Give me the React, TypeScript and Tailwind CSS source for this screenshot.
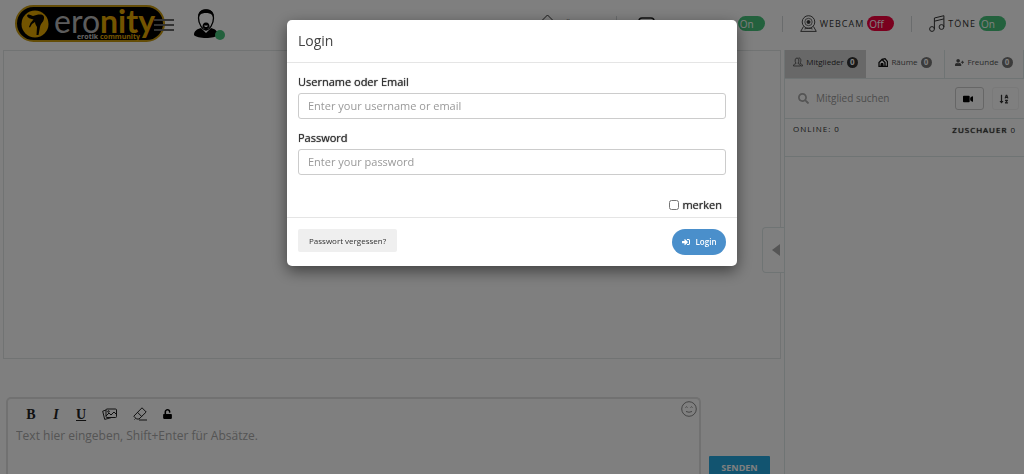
import React from 'react';
import { FaSearch, FaVideo, FaUserPlus, FaSignInAlt, FaUnlock, FaSortAlphaDown } from 'react-icons/fa';

interface NavToggleProps {
  label: string;
  on: boolean;
  icon: React.ReactNode;
}

const Switch: React.FC<{ label: string; on: boolean }> = ({ label, on }) => (
  <button
    type="button"
    role="switch"
    aria-checked={on}
    aria-label={label}
    className={`flex h-[15px] w-[27px] shrink-0 items-center rounded-full pl-[2px] pt-[2px] text-[10px] tracking-normal text-white ${on ? 'bg-[#46c37b]' : 'bg-[#f5003d]'}`}
  >
    {on ? 'On' : 'Off'}
  </button>
);

const NavToggle: React.FC<NavToggleProps> = ({ label, on, icon }) => (
  <div className="flex items-center gap-[3px] text-[9px] tracking-[1px] text-[#333]">
    {icon}
    <span>{label}</span>
    <Switch label={label} on={on} />
  </div>
);

const Divider = () => <span className="h-4 w-px bg-[#d4d8da]" />;

const Logo = () => (
  <a href="#" aria-label="eronity" className="flex h-[37px] w-[150px] shrink-0 items-center rounded-full border-2 border-[#c99a10] bg-black pl-[4px]">
    <svg viewBox="0 0 28 28" className="h-7 w-7 shrink-0" aria-hidden="true">
      <circle cx="14" cy="14" r="13.5" fill="#e6a800" />
      <path
        d="M6 6c0-1.500 2-2 3.500-1L12 6c3-1 7-2 9.500-1 2 1 2 4 .5 6.500-1.500 2-2.500 3-3 5.500l-1.500 8h-2l.5-8c-1-2-2-3-2-5l-3 2-2 3.500-1-.5 1.500-4 3-3.500C10 8.500 8 9 6 6z"
        fill="#0a0700"
      />
    </svg>
    <span className="ml-[5px] flex flex-col items-end">
      <span className="font-['Lato'] text-[32px] leading-[25px] text-[#b8b8b8]">
        ero<b className="text-[#e6a800]">nity</b>
      </span>
      <span className="mr-[15px] text-[7px] font-bold leading-[7px] text-[#ccc]">
        erotik <span className="text-[#e6a800]">community</span>
      </span>
    </span>
  </a>
);

const Avatar = () => (
  <div className="relative ml-5 h-[30px] w-[24px]">
    <svg viewBox="0 0 24 30" className="h-[30px] w-[24px]" aria-hidden="true">
      <path d="M0 26c0-4 3-6 7-7l5 5 5-5c4 1 7 3 7 7-3 4-21 4-24 0z" fill="#000" />
      <path d="M4.500 9C4.500 4 7 1 12 1s7.500 3 7.500 8c0 6-4 12-7.500 12S4.500 15 4.500 9z" fill="#fff" stroke="#000" strokeWidth="1.300" />
      <path d="M4.500 10C3.500 3 7 .5 12 .5S20.500 3 19.500 10c-.5-4-2.500-6-7.500-6s-7 2-7.500 6z" fill="#000" />
      <path d="M8.500 18c0-3 1-4.500 3.500-4.500s3.500 1.500 3.500 4.500L12 21.500z" fill="#000" />
      <path d="M10 16.500h4l-1 1.500h-2z" fill="#fff" />
    </svg>
    <span className="absolute -bottom-px left-[21px] h-[10px] w-[10px] rounded-full bg-[#46c37b]" />
  </div>
);

const WebcamIcon = () => (
  <svg viewBox="0 0 17 17" className="h-[17px] w-[17px]" fill="none" stroke="#333" aria-hidden="true">
    <circle cx="8.500" cy="7" r="6.300" strokeWidth=".9" />
    <circle cx="8.500" cy="7" r="3.700" strokeWidth=".7" />
    <circle cx="8.500" cy="7" r="1.500" fill="#333" />
    <path d="M3.500 11.500L.7 16.400h15.600l-2.800-4.900M4.500 14c2-1 6-1 8 0" strokeWidth=".9" />
  </svg>
);

const MusicIcon = () => (
  <svg viewBox="0 0 16 17" className="h-[17px] w-4" fill="none" stroke="#333" aria-hidden="true">
    <circle cx="3" cy="14" r="2.400" />
    <circle cx="12.500" cy="12" r="2.400" />
    <path d="M5.400 14V3l9.500-2.300V12M5.400 6.200l9.500-2.300" />
  </svg>
);

const sidebarTabs = [
  { id: 'mitglieder', label: 'Mitglieder', active: true },
  { id: 'raeume', label: 'Räume', active: false },
  { id: 'freunde', label: 'Freunde', active: false },
];

const TabIcon: React.FC<{ id: string }> = ({ id }) => {
  if (id === 'freunde') return <FaUserPlus className="h-[9px] w-[9px]" />;
  if (id === 'raeume')
    return (
      <svg viewBox="0 0 10 9" className="h-[9px] w-[10px]" fill="none" stroke="#111" aria-hidden="true">
        <path d="M1 8.500V4.500L4 1.500l3 3v4zM4 1.500l3-.8 2.500 3v4.800H7" strokeWidth="1.300" />
        <path d="M3 8.500v-3h2v3" fill="#111" />
      </svg>
    );
  return (
    <svg viewBox="0 0 10 10" className="h-[10px] w-[10px]" fill="none" stroke="#444" strokeWidth=".8" aria-hidden="true">
      <path d="M.5 9c0-2 1.500-2 2.500-2.500C1.500 4 2 1 4 1s2.500 3 1 5.500C6 7 7.500 7 7.500 9zM5.500 1C8 .5 8.500 4 7 6.200 8 7 9.500 7 9.500 9H8" />
    </svg>
  );
};

const Header = () => (
  <header className="flex h-[50px] shrink-0 items-center justify-between pb-[3px] pl-[15px] pr-[18px]">
    <div className="flex items-center">
      <Logo />
      <button type="button" aria-label="Menü" className="relative -ml-[11px] mt-[3px] flex w-5 flex-col gap-[3px]">
        <span className="h-[2px] bg-[#666]" />
        <span className="h-[2px] bg-[#666]" />
        <span className="h-[2px] bg-[#666]" />
      </button>
      <Avatar />
    </div>
    <nav className="flex items-center gap-[17px]">
      <a href="#" className="flex w-[60px] items-center gap-[3px] text-[9px] tracking-[1px] text-[#333]">
        <svg viewBox="0 0 17 20" className="h-5 w-[17px] shrink-0" fill="none" stroke="#333" aria-hidden="true">
          <path d="M.5 9l8-8 8 8M3 8v11h11V8" />
        </svg>
        RÄUME
      </a>
      <Divider />
      <div className="flex w-[131px] items-center justify-between pl-1 text-[9px] tracking-[1px] text-[#333]">
        <svg viewBox="0 0 17 14" className="h-[14px] w-[17px]" fill="none" stroke="#222" aria-hidden="true">
          <rect x="1" y="1" width="15" height="12" rx="3" strokeWidth="1.500" />
        </svg>
        PRIVATCHAT
        <Switch label="Privatchat" on />
      </div>
      <Divider />
      <NavToggle label="WEBCAM" on={false} icon={<WebcamIcon />} />
      <Divider />
      <NavToggle label="TÖNE" on icon={<MusicIcon />} />
    </nav>
  </header>
);

const Sidebar = () => (
  <aside className="relative w-[240px] shrink-0 border-l border-[#dfe8e8] text-[#333]">
    <button
      type="button"
      aria-label="Seitenleiste"
      className="absolute -left-[23px] top-[177px] flex h-[46px] w-[22px] items-center justify-center rounded-l border border-r-0 border-[#dfe8e8] bg-white pl-1"
    >
      <svg viewBox="0 0 8 12" className="h-3 w-2" aria-hidden="true">
        <path d="M8 0v12L0 6z" fill="#aaa" />
      </svg>
    </button>
    <div role="tablist" className="flex h-[29px] border-b border-[#dfe8e8] text-[8px]">
      {sidebarTabs.map((tab) => (
        <button
          key={tab.id}
          type="button"
          role="tab"
          aria-selected={tab.active}
          className={`flex items-center justify-center gap-[3px] pb-1 ${tab.active ? 'w-[81px] bg-[#d0d0d0]' : 'flex-1 border-r border-[#dfe8e8] text-[#555]'}`}
        >
          <TabIcon id={tab.id} />
          {tab.label}
          <span className={`flex h-[11px] w-[11px] items-center justify-center rounded-full text-[8px] font-bold text-white ${tab.active ? 'bg-[#333]' : 'bg-[#777]'}`}>
            0
          </span>
        </button>
      ))}
    </div>
    <div className="flex h-[40px] items-center border-b border-[#dfe8e8] pl-[13px] pr-[5px]">
      <FaSearch className="h-[11px] w-[11px] text-[#aaa]" />
      <input aria-label="Mitglied suchen" placeholder="Mitglied suchen" className="ml-[7px] min-w-0 flex-1 bg-transparent text-[10px] outline-none placeholder:text-[#999]" />
      <button type="button" aria-label="Nur mit Webcam" className="flex h-[23px] w-[29px] items-center justify-center rounded-[3px] border border-[#ccc] pr-[3px]">
        <FaVideo className="h-[10px] w-[10px] text-black" />
      </button>
      <button type="button" aria-label="Sortieren" className="ml-[8px] flex h-[23px] w-[27px] items-center justify-center rounded-[3px] border border-[#f2f2f2] pr-[3px]">
        <FaSortAlphaDown className="h-[10px] w-[10px]" />
      </button>
    </div>
    <div className="flex h-[38px] justify-between border-b border-[#dfe8e8] pl-2 pr-[8px] pt-[3px] text-[8px] leading-[14px] tracking-[1px]">
      <span>ONLINE: 0</span>
      <span className="pt-[1px]">
        <span className="[text-shadow:0_0_1px_#000]">ZUSCHAUER</span> 0
      </span>
    </div>
  </aside>
);

const Composer = () => (
  <div className="flex h-[77px] shrink-0 gap-2 pl-[3px] pr-[11px]">
    <div className="flex-1 rounded-t-[5px] border-2 border-b-0 border-[#e2e2e2] pl-2 pr-[2px] pt-[2px]">
      <div className="flex h-[27px] items-start justify-between">
        <div className="flex h-[26px] items-center gap-4 pl-[10px] font-['Liberation_Serif'] text-[14px] text-[#222]">
          <button type="button" aria-label="Fett" className="w-[10px] font-bold">B</button>
          <button type="button" aria-label="Kursiv" className="w-[8px] font-bold italic">I</button>
          <button type="button" aria-label="Unterstrichen" className="w-[10px] font-bold underline">U</button>
          <button type="button" aria-label="Bild">
            <svg viewBox="0 0 15 12" className="h-3 w-[15px]" fill="none" stroke="#222" aria-hidden="true">
              <rect x="4" y="1" width="10.500" height="8.500" rx="1" />
              <path d="M4 2L.7 3.200l2 8.200L9 9.700M4 8l3-3 2 2 3-3 2.500 2.500" />
              <circle cx="6.500" cy="3.500" r=".8" />
            </svg>
          </button>
          <button type="button" aria-label="Löschen">
            <svg viewBox="0 0 14 14" className="h-[14px] w-[14px]" fill="none" stroke="#222" aria-hidden="true">
              <path d="M9 .8L13.200 5 6 12H3.500L.8 9.200zM4.500 5.300l4.200 4.200M6 13h8M1.500 12.500l1-1" />
            </svg>
          </button>
          <button type="button" aria-label="Entsperren">
            <FaUnlock className="h-[10px] w-[9px] text-black" />
          </button>
        </div>
        <button type="button" aria-label="Smileys">
          <svg viewBox="0 0 16 16" className="h-4 w-4" fill="none" stroke="#888" aria-hidden="true">
            <circle cx="8" cy="8" r="7.300" />
            <path d="M4.500 6.500q1-1.500 2 0M9.500 6.500q1-1.500 2 0M5 10.500q3 1.500 6 0" />
          </svg>
        </button>
      </div>
      <textarea
        aria-label="Nachricht"
        placeholder="Text hier eingeben, Shift+Enter für Absätze."
        className="block h-[44px] w-full resize-none bg-transparent text-[12px] leading-[16px] outline-none placeholder:text-[#aaa]"
      />
    </div>
    <button type="button" className="mt-[59px] h-6 w-[61px] rounded-[1px] bg-[#25a9e0] text-[9px] font-bold text-white">
      SENDEN
    </button>
  </div>
);

const LoginDialog = () => (
  <div className="fixed inset-0 flex items-start justify-center bg-black/50 px-4 pt-5">
    <form
      role="dialog"
      aria-label="Login"
      onSubmit={(e) => e.preventDefault()}
      className="w-full max-w-[450px] rounded-[5px] bg-white text-[#333] shadow-[0_5px_15px_rgba(0,0,0,0.5)]"
    >
      <h4 className="border-b border-[#e5e5e5] px-[11px] py-[11px] text-[14px] leading-5 text-[#444]">Login</h4>
      <div className="px-[11px] pt-[11px]">
        <label htmlFor="username" className="block text-[11px] leading-4 [text-shadow:0_0_1px_#333]">
          Username oder Email
        </label>
        <input id="username" placeholder="Enter your username or email" className="mt-[3px] h-[26px] w-full rounded-[3px] border border-[#ccc] px-[9px] pb-[2px] text-[11px] placeholder:text-[#999]" />
        <label htmlFor="password" className="mt-[11px] block text-[11px] leading-4 [text-shadow:0_0_1px_#333]">
          Password
        </label>
        <input id="password" type="password" placeholder="Enter your password" className="mt-[3px] h-[26px] w-full rounded-[3px] border border-[#ccc] px-[9px] pb-[2px] text-[11px] placeholder:text-[#999]" />
        <label className="mt-[22px] flex items-center justify-end gap-[3px] pb-1 pr-1 text-[11px] leading-4 [text-shadow:0_0_1px_#333]">
          <input type="checkbox" className="h-[10px] w-[10px]" />
          merken
        </label>
      </div>
      <div className="flex items-start justify-between border-t border-[#e5e5e5] p-[11px]">
        <button type="button" className="h-[23px] rounded-[2px] bg-[#efefef] px-[11px] text-[8px]">
          Passwort vergessen?
        </button>
        <button type="submit" className="flex h-[26px] w-[54px] items-center justify-center gap-[6px] rounded-full bg-[#4a8fcb] text-[8px] font-semibold text-white">
          <FaSignInAlt className="h-2 w-2" />
          Login
        </button>
      </div>
    </form>
  </div>
);

export default function App() {
  return (
    <div className="flex h-screen flex-col overflow-hidden bg-white font-['Open_Sans',sans-serif]">
      <Header />
      <div className="flex min-h-0 flex-1">
        <main className="flex min-w-0 flex-1 flex-col px-[3px]">
          <section aria-label="Chat" className="mb-[38px] flex-1 border border-[#e2e6e6]" />
          <Composer />
        </main>
        <Sidebar />
      </div>
      <LoginDialog />
    </div>
  );
}
